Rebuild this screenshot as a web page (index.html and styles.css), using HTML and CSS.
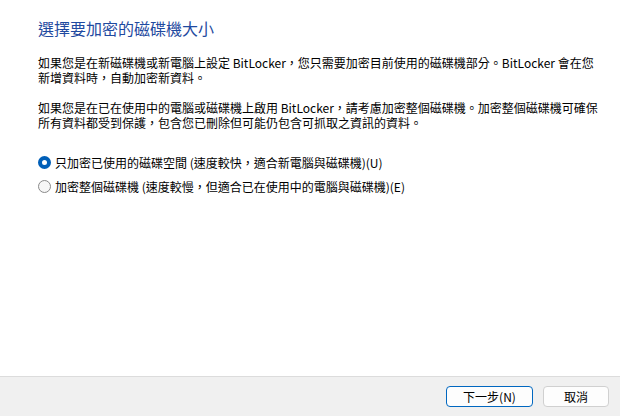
FILE: index.html
```html
<!DOCTYPE html>
<html lang="zh-Hant">
<head>
  <meta charset="UTF-8">
  <title>BitLocker 磁碟機加密</title>
  <link rel="stylesheet" href="styles.css">
</head>
<body>

<div class="wizard">
  <div class="content">
    <h1 class="main-title">選擇要加密的磁碟機大小</h1>

    <p class="desc">
      <span class="line">如果您是在新磁碟機或新電腦上設定 BitLocker，您只需要加密目前使用的磁碟機部分。BitLocker 會在您</span>
      <span class="line">新增資料時，自動加密新資料。</span>
    </p>

    <p class="desc">
      <span class="line">如果您是在已在使用中的電腦或磁碟機上啟用 BitLocker，請考慮加密整個磁碟機。加密整個磁碟機可確保</span>
      <span class="line">所有資料都受到保護，包含您已刪除但可能仍包含可抓取之資訊的資料。</span>
    </p>

    <div class="options">
      <label class="option">
        <input type="radio" name="size" value="used" checked>
        <span>只加密已使用的磁碟空間 (速度較快，適合新電腦與磁碟機)(U)</span>
      </label>
      <label class="option">
        <input type="radio" name="size" value="full">
        <span>加密整個磁碟機 (速度較慢，但適合已在使用中的電腦與磁碟機)(E)</span>
      </label>
    </div>
  </div>

  <!-- 하단 버튼 영역 -->
  <div class="footer">
    <button type="button" class="btn btn-default">下一步(N)</button>
    <button type="button" class="btn btn-cancel">取消</button>
  </div>
</div>

</body>
</html>
```

FILE: styles.css
```css
html, body {
  margin: 0;
  padding: 0;
  height: 100%;
}

body {
  font-family: "Noto Sans CJK TC", "Noto Sans", sans-serif;
  font-size: 12px;
  color: #000;
  background-color: #fff;
}

.wizard {
  display: flex;
  flex-direction: column;
  height: 416px;
}

.content {
  flex: 1;
  padding: 18px 20px 0 38px;
}

.main-title {
  margin: 0 0 17px;
  font-size: 16px;
  font-weight: normal;
  line-height: 20px;
  color: #1f4aa0;
}

.desc {
  margin: 0 0 15px;
  line-height: 15px;
}

.desc .line {
  display: block;
  white-space: nowrap;
}

.options {
  margin-top: 20px;
  display: flex;
  flex-direction: column;
}

.option {
  display: flex;
  align-items: center;
  height: 24px;
  white-space: nowrap;
}

.option input[type="radio"] {
  appearance: none;
  -webkit-appearance: none;
  box-sizing: border-box;
  width: 13px;
  height: 13px;
  margin: 0 4px 0 0;
  border: 1px solid #8a8a8a;
  border-radius: 50%;
  background-color: #f6f6f6;
}

.option input[type="radio"]:checked {
  border: 4px solid #005fb8;
  background-color: #fff;
}

.footer {
  display: flex;
  justify-content: flex-end;
  gap: 10px;
  height: 40px;
  padding: 9px 11px 0 0;
  box-sizing: border-box;
  border-top: 1px solid #dcdcdc;
  background-color: #f0f0f0;
}

.btn {
  box-sizing: border-box;
  height: 21px;
  padding: 0;
  font-family: inherit;
  font-size: 12px;
  line-height: 19px;
  color: #000;
  background-color: #fdfdfd;
  border: 1px solid #d0d0d0;
  border-radius: 4px;
}

.btn-default {
  width: 87px;
  border-color: #0067c0;
}

.btn-cancel {
  width: 66px;
}
```
